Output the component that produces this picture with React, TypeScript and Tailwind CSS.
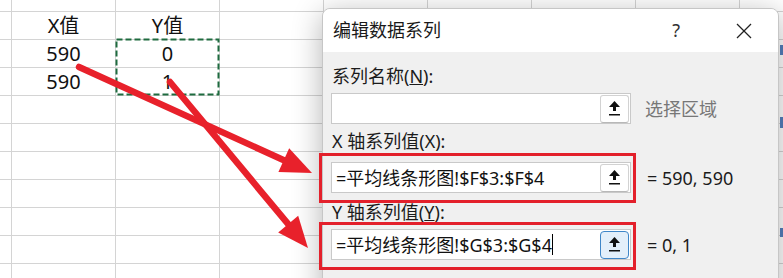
import React from 'react';

const cells: Record<string, string> = {
  '1-1': 'X值',
  '1-2': 'Y值',
  '2-1': '590',
  '2-2': '0',
  '3-1': '590',
  '3-2': '1',
};

function UploadIcon() {
  return (
    <svg width="11" height="15" viewBox="0 0 11 15">
      <polygon points="5.5,0 11,6 0,6" fill="#111" />
      <rect x="4" y="5" width="3" height="5" fill="#111" />
      <rect x="0" y="13" width="11" height="1.5" fill="#111" />
    </svg>
  );
}

function RangeInput({ value, active, caret }: { value: string; active?: boolean; caret?: boolean }) {
  return (
    <div className="flex items-center w-[300px] h-[31px] bg-white border border-[#c9c9c9]">
      <div className="flex-1 flex items-center pl-[4px] text-[18px] leading-none text-[#111] whitespace-nowrap">
        {value}
        {caret && <span className="inline-block w-px h-[21px] bg-black" />}
      </div>
      <div
        className={
          active
            ? 'flex items-center justify-center w-[29px] h-[28px] mr-px rounded-[4px] border border-[#3f86c8] bg-[#e3effa]'
            : 'flex items-center justify-center w-[29px] h-[28px] mr-px rounded-[3px] border border-[#d2d2d2] border-b-[#b8b8b8] bg-white'
        }
      >
        <UploadIcon />
      </div>
    </div>
  );
}

function Arrow({ x1, y1, x2, y2 }: { x1: number; y1: number; x2: number; y2: number }) {
  const dx = x2 - x1;
  const dy = y2 - y1;
  const len = Math.hypot(dx, dy);
  const ux = dx / len;
  const uy = dy / len;
  const bx = x2 - 31 * ux;
  const by = y2 - 31 * uy;
  const nx = -uy;
  const ny = ux;
  const pts = `${x2},${y2} ${bx + 13 * nx},${by + 13 * ny} ${bx - 13 * nx},${by - 13 * ny}`;
  return (
    <g>
      <line x1={x1} y1={y1} x2={bx + 2 * ux} y2={by + 2 * uy} stroke="#e8212b" strokeWidth="6.5" strokeLinecap="round" />
      <polygon points={pts} fill="#e8212b" />
    </g>
  );
}

export default function App() {
  const rows = Array.from({ length: 11 }, (_, r) => r);
  const cols = Array.from({ length: 9 }, (_, c) => c);

  return (
    <div className="relative w-[783px] h-[278px] overflow-hidden bg-white font-['Noto_Sans','Noto_Sans_CJK_SC',sans-serif] text-[#1b1b1b]">
      {/* sheet grid */}
      <div className="grid grid-cols-[12px_repeat(8,104px)] grid-rows-[12px_repeat(10,28px)]">
        {rows.map((r) =>
          cols.map((c) => (
            <div
              key={`${r}-${c}`}
              className="flex items-end justify-center pb-[1px] border-r border-b border-[#d4d4d4] text-[20px] leading-[24px] text-[#111]"
            >
              {cells[`${r}-${c}`] ?? ''}
            </div>
          )),
        )}
      </div>

      {/* dialog */}
      <div className="absolute left-[322px] top-[8px] w-[457px] h-[300px] rounded-t-[8px] border border-[#c6c6c6] bg-[#f0f0f0] shadow-[0_6px_30px_rgba(0,0,0,0.3)] overflow-hidden">
        <div className="flex items-center h-[43px] bg-white pl-[10px]">
          <span className="text-[18px] text-[#1a1a1a]">编辑数据系列</span>
          <span className="ml-auto mr-[56px] text-[18px] text-[#333]">?</span>
          <svg width="16" height="16" viewBox="0 0 16 16" className="mr-[26px]">
            <line x1="1" y1="1" x2="15" y2="15" stroke="#222" strokeWidth="1.2" />
            <line x1="15" y1="1" x2="1" y2="15" stroke="#222" strokeWidth="1.2" />
          </svg>
        </div>

        <div className="flex flex-col pl-[8px] pt-[12px] text-[18px] leading-[24px]">
          <div className="pl-[1px]">
            系列名称(<span className="underline">N</span>):
          </div>
          <div className="flex items-center mt-[5px]">
            <RangeInput value="" />
            <span className="ml-[14px] text-[#777]">选择区域</span>
          </div>

          <div className="pl-[1px] mt-[5px]">X 轴系列值(X):</div>
          <div className="flex items-center mt-[9px]">
            <RangeInput value="=平均线条形图!$F$3:$F$4" />
            <span className="ml-[16px]">= 590, 590</span>
          </div>

          <div className="pl-[1px] mt-[7px]">
            Y 轴系列值(<span className="underline">Y</span>):
          </div>
          <div className="flex items-center mt-[5px]">
            <RangeInput value="=平均线条形图!$G$3:$G$4" active caret />
            <span className="ml-[16px]">= 0, 1</span>
          </div>
        </div>
      </div>

      {/* sheet marks at right edge */}
      <div className="absolute left-[780px] top-[45px] w-[3px] h-[10px] bg-[#4a6fa5]" />
      <div className="absolute left-[780px] top-[117px] w-[3px] h-[11px] bg-[#4a6fa5]" />
      <div className="absolute left-[780px] top-[228px] w-[3px] h-[9px] bg-[#4a6fa5]" />

      {/* annotation boxes */}
      <div className="absolute left-[319px] top-[153px] w-[317px] h-[50px] border-[3px] border-[#e3202b]" />
      <div className="absolute left-[319px] top-[222px] w-[317px] h-[48px] border-[3px] border-[#e3202b]" />

      {/* copy marquee + arrows */}
      <svg className="absolute inset-0 pointer-events-none" width="783" height="278">
        <rect x="116.5" y="39.5" width="102" height="55" fill="none" stroke="#1e6b3f" strokeWidth="2" strokeDasharray="6 3" />
        <Arrow x1={79} y1={67} x2={312} y2={173} />
        <Arrow x1={170} y1={82} x2={308} y2={248} />
      </svg>
    </div>
  );
}
